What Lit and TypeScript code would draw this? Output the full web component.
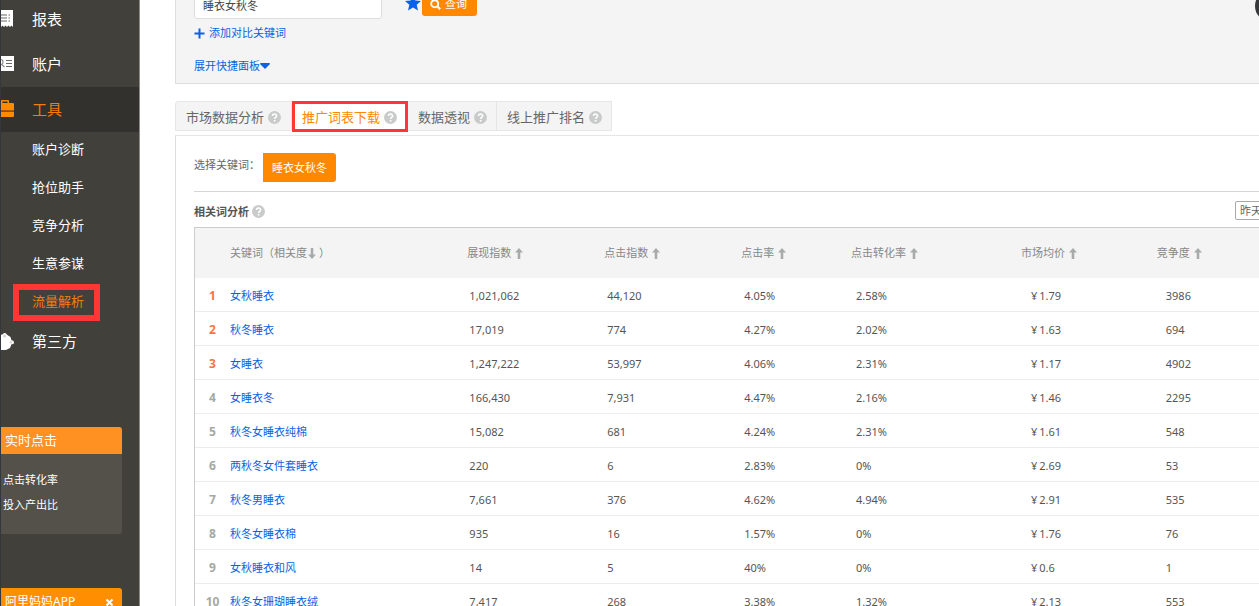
import { LitElement, html, css, svg } from "lit";
import { customElement } from "lit/decorators.js";
import { classMap } from "lit/directives/class-map.js";

type Row = [string, string, string, string, string, string, string];

const ROWS: Row[] = [
  ["女秋睡衣", "1,021,062", "44,120", "4.05%", "2.58%", "1.79", "3986"],
  ["秋冬睡衣", "17,019", "774", "4.27%", "2.02%", "1.63", "694"],
  ["女睡衣", "1,247,222", "53,997", "4.06%", "2.31%", "1.17", "4902"],
  ["女睡衣冬", "166,430", "7,931", "4.47%", "2.16%", "1.46", "2295"],
  ["秋冬女睡衣纯棉", "15,082", "681", "4.24%", "2.31%", "1.61", "548"],
  ["两秋冬女件套睡衣", "220", "6", "2.83%", "0%", "2.69", "53"],
  ["秋冬男睡衣", "7,661", "376", "4.62%", "4.94%", "2.91", "535"],
  ["秋冬女睡衣棉", "935", "16", "1.57%", "0%", "1.76", "76"],
  ["女秋睡衣和风", "14", "5", "40%", "0%", "0.6", "1"],
  ["秋冬女珊瑚睡衣绒", "7,417", "268", "3.38%", "1.32%", "2.13", "553"],
];

const METRICS = ["展现指数", "点击指数", "点击率", "点击转化率", "市场均价", "竞争度"];
const TOOLS = ["账户诊断", "抢位助手", "竞争分析", "生意参谋", "流量解析"];
const TABS = ["市场数据分析", "推广词表下载", "数据透视", "线上推广排名"];

const help = html`<svg class="help" viewBox="0 0 13 13" aria-hidden="true">
  <circle cx="6.5" cy="6.5" r="6.5" fill="#c9cbca" />
  <path d="M4.5 5.1C4.5 2.4 8.6 2.5 8.6 4.9C8.6 6.3 6.6 6.3 6.6 8" fill="none" stroke="#fff" stroke-width="1.5" />
  <rect x="5.8" y="9" width="1.6" height="1.6" fill="#fff" />
</svg>`;

const arrow = (down = false) => html`<svg class=${classMap({ arrow: true, down })} viewBox="0 0 8 11" aria-hidden="true">
  <path d="M4 0L8 4.6H5.3V11H2.7V4.6H0Z" fill="#a9abab" />
</svg>`;

const icons = {
  report: svg`<path d="M0 0H13V17L11.5 15.5L10 17L8.5 15.5L7 17L5.5 15.5L4 17L2.5 15.5L1 17L0 16Z" fill="#fff"/><path d="M0 5H7M0 8H7M0 11H7M8.5 5H10M8.5 8H10M8.5 11H10" stroke="#6b6964" stroke-width="1.2"/>`,
  account: svg`<path d="M0 1H14V16H0Z" fill="#fff"/><path d="M6 5.5H12M6 8.5H12M6 11.5H12" stroke="#6b6964" stroke-width="1.2"/><path d="M0 5Q3 4 3 7Q3 9 1.5 9.5L4.5 12" fill="none" stroke="#8b8985" stroke-width="1.2"/>`,
  tools: svg`<path d="M0 3H1V1Q1 0 2 0H8Q9 0 9 1V3H13Q14 3 14 4V10.500H0ZM2.500 3H7.500V1.400H2.500Z" fill="#ff8a00" fill-rule="evenodd"/><path d="M0 11.800H14V16Q14 17 13 17H0Z" fill="#ff8a00"/><path d="M0 11H14" stroke="#a65d08" stroke-width="1"/>`,
  plugin: svg`<path d="M0 2L2.500 1.500Q3 0 4.700 0T7 1.800L10.500 4L11.500 7.300Q14 7.300 14 9.400T11.500 11.300L10 15L6 17H0Z" fill="#fff"/><circle cx="4.600" cy="3" r="1.600" fill="#d9d7d4"/><circle cx="11" cy="9.300" r="1.400" fill="#d9d7d4"/>`,
};

const icon = (name: keyof typeof icons) => html`<svg class="nav-icon" viewBox="0 0 14 17" aria-hidden="true">${icons[name]}</svg>`;

@customElement("side-bar")
class SideBar extends LitElement {
  static styles = css`
    :host {
      display: flex;
      flex-direction: column;
      flex: 0 0 140px;
      box-sizing: border-box;
      border-left: 1px solid #34373b;
      border-right: 1px solid #8c8b89;
      background: #42403b;
      color: #fff;
      overflow: hidden;
    }
    a { color: inherit; text-decoration: none; }
    nav { margin-top: -3px; }
    .item {
      display: flex;
      align-items: center;
      gap: 18px;
      height: 45px;
      box-sizing: border-box;
      padding-bottom: 2px;
      font-size: 15px;
    }
    .item:last-child { height: 42px; }
    .item.active { background: #33312d; color: #f27d0c; }
    .nav-icon { width: 14px; height: 17px; flex: none; margin-left: -1px; }
    ul {
      display: grid;
      gap: 1px;
      margin: 0;
      padding: 0;
      list-style: none;
      font-size: 13px;
    }
    li a {
      position: relative;
      display: block;
      height: 37px;
      line-height: 35px;
      padding-left: 31px;
    }
    li a.current { color: #f27d0c; }
    .frame {
      position: absolute;
      left: 12px;
      top: 0;
      width: 87px;
      height: 37px;
      box-sizing: border-box;
      border: 6px solid #fd3733;
    }
    .card { margin: 64px 17px 0 0; border-radius: 0 3px 3px 0; overflow: hidden; background: #54504a; flex: none; }
    .card + .card { margin-top: 54px; }
    .card-title {
      display: flex;
      justify-content: space-between;
      align-items: center;
      height: 27px;
      box-sizing: border-box;
      padding: 0 8px 1px 4px;
      margin: 0;
      background: #ff9022;
      font-size: 13px;
      font-weight: 400;
    }
    .card-title.app { padding-top: 2px; background: #ff8f00; font-size: 12px; }
    .card-body { padding: 13px 0 17px 2px; font-size: 11px; line-height: 25px; }
    .card-body { padding-bottom: 17px; }
    .card-body p { margin: 0; }
    button {
      border: 0;
      padding: 0;
      width: 9px;
      height: 9px;
      background: none;
      color: #fff;
      display: block;
    }
    button svg { display: block; width: 9px; height: 9px; }
  `;

  render() {
    return html`
      <nav>
        <a class="item" href="#report">${icon("report")}<span>报表</span></a>
        <a class="item" href="#account">${icon("account")}<span>账户</span></a>
        <a class="item active" href="#tools">${icon("tools")}<span>工具</span></a>
        <ul>
          ${TOOLS.map((t, i) => {
            const current = i === TOOLS.length - 1;
            return html`<li><a class=${classMap({ current })} href="#tool">${t}${current ? html`<span class="frame"></span>` : ""}</a></li>`;
          })}
        </ul>
        <a class="item" href="#third">${icon("plugin")}<span>第三方</span></a>
      </nav>
      <section class="card">
        <h2 class="card-title">实时点击</h2>
        <div class="card-body"><p>点击转化率</p><p>投入产出比</p></div>
      </section>
      <section class="card">
        <h2 class="card-title app">阿里妈妈APP
          <button aria-label="关闭"><svg viewBox="0 0 9 9"><path d="M1.500 1.500L7.500 7.500M7.500 1.500L1.500 7.500" stroke="#fff" stroke-width="2"/></svg></button>
        </h2>
      </section>
    `;
  }
}

@customElement("keyword-table")
class KeywordTable extends LitElement {
  static styles = css`
    :host { display: block; font-size: 11px; }
    table {
      width: 100%;
      table-layout: fixed;
      border-collapse: separate;
      border-spacing: 0;
      box-sizing: border-box;
      border: 1px solid #ccc;
      border-width: 1px 1px 0;
    }
    .c-rank { width: 35px; }
    .c-word { width: 21.5%; }
    .c-m0, .c-m1 { width: 12.4%; }
    .c-m2 { width: 9.95%; }
    .c-m3 { width: 15.4%; }
    .c-m4 { width: 12.3%; }
    th, td { padding: 0; text-align: left; white-space: nowrap; }
    th {
      height: 50px;
      background: #f4f4f4;
      color: #888;
      font-weight: 400;
    }
    td { height: 31px; padding-top: 2px; border-bottom: 1px solid #ececec; color: #555; }
    .rank { text-align: center; font-size: 12px; font-weight: 700; color: #a3aaa6; }
    .rank.top { color: #fa7346; }
    .m0 { padding-left: 2px; }
    .m1, .m2 { padding-left: 3px; }
    .m3 { padding-left: 5px; }
    .m4 { padding-left: 10px; }
    .m5 { padding-left: 9px; }
    .yen { padding-right: 2px; }
    a { color: #0a62e6; text-decoration: none; }
    .arrow { width: 8px; height: 11px; margin-left: 4px; vertical-align: -2px; }
    .arrow.down { margin-left: 1px; margin-right: 3px; transform: rotate(180deg); }
  `;

  render() {
    return html`
      <table>
        <colgroup>
          <col class="c-rank" /><col class="c-word" />
          ${METRICS.map((_, i) => html`<col class="c-m${i}" />`)}
        </colgroup>
        <thead>
          <tr>
            <th></th>
            <th>关键词（相关度${arrow(true)}）</th>
            ${METRICS.map((m) => html`<th>${m}${arrow()}</th>`)}
          </tr>
        </thead>
        <tbody>
          ${ROWS.map(([word, ...cells], r) => html`<tr>
            <td class=${classMap({ rank: true, top: r < 3 })}>${r + 1}</td>
            <td><a href="#word">${word}</a></td>
            ${cells.map((c, i) => html`<td class="m${i}">${i === 4 ? html`<span class="yen">¥</span>` : ""}${c}</td>`)}
          </tr>`)}
        </tbody>
      </table>
    `;
  }
}

@customElement("app-root")
class AppRoot extends LitElement {
  static styles = css`
    :host {
      position: relative;
      display: flex;
      height: 100vh;
      overflow: hidden;
      background: #fff;
      color: #666;
      font: 11px/16px "Noto Sans", "Noto Sans CJK SC", sans-serif;
    }
    main { flex: 1; min-width: 0; overflow: hidden; padding-left: 35px; }
    .work { width: calc(100% + 60px); }
    a { color: #0a62e6; text-decoration: none; }
    button, input, select { font: inherit; }
    .search {
      margin-top: -14px;
      padding: 0 18px 9px;
      background: #f4f4f4;
      border: 1px solid #dedede;
      border-top: 0;
    }
    .query { display: flex; align-items: flex-start; }
    .query input {
      width: 188px;
      height: 30px;
      margin-top: 3px;
      box-sizing: border-box;
      padding: 2px 8px 0;
      border: 1px solid #ddd;
      border-radius: 3px;
      color: #444;
      background: #fff;
    }
    .star { width: 16px; height: 16px; margin: 9px 1px 0 23px; }
    .go {
      display: flex;
      align-items: center;
      gap: 4px;
      width: 55px;
      height: 30px;
      padding: 6px 0 0 8px;
      border: 0;
      border-radius: 3px;
      background: #ff8800;
      color: #fff;
    }
    .go svg { width: 11px; height: 11px; }
    .add, .expand { display: flex; align-items: center; width: max-content; }
    .add { gap: 4px; margin-top: 6px; }
    .add svg { width: 11px; height: 11px; }
    .expand { margin-top: 17px; }
    .expand svg { width: 10px; height: 6px; }
    .tabs { display: flex; margin-top: 17px; height: 31px; }
    .tab {
      display: flex;
      align-items: center;
      gap: 4px;
      height: 30px;
      padding: 2px 9px 0 10px;
      box-sizing: border-box;
      border: 1px solid #e6e6e6;
      border-left: 0;
      background: #f4f4f4;
      color: #666;
      font-size: 13px;
      white-space: nowrap;
    }
    .tab:first-child { padding-right: 10px; border-left: 1px solid #e6e6e6; border-radius: 3px 0 0 0; }
    .tab.active {
      height: 31px;
      padding: 1px 8px 0 7px;
      border: 3px solid #fd3733;
      background: #fff;
      color: #ff8800;
    }
    .help { width: 13px; height: 13px; flex: none; }
    .panel {
      margin-top: 3px;
      padding: 17px 18px 0;
      border: 1px solid #ddd;
      border-top-color: #e6e6e6;
    }
    .pick { display: flex; gap: 3px; padding-bottom: 9px; border-bottom: 1px solid #d6d6d6; }
    .pick span { line-height: 24px; }
    .chip {
      width: 73px;
      height: 29px;
      padding: 1px 0 0;
      border: 0;
      border-radius: 0 3px 3px 0;
      background: #ff8800;
      color: #fff;
    }
    .head { display: flex; align-items: center; justify-content: space-between; height: 35px; }
    h1 {
      display: flex;
      align-items: center;
      gap: 3px;
      margin: 0;
      padding-top: 4px;
      font-size: 11px;
      color: #555;
    }
    select {
      width: 65px;
      height: 19px;
      margin-top: 2px;
      padding: 0;
      border: 1px solid #a9a9a9;
      border-radius: 2px;
      background: #fff;
      color: #666;
    }
    .bubble {
      position: absolute;
      right: -28px;
      top: -10px;
      width: 32px;
      height: 32px;
      border: 0;
      border-radius: 50%;
      background: #38393b;
    }
  `;

  render() {
    return html`
      <side-bar></side-bar>
      <main>
        <div class="work">
          <section class="search">
            <div class="query">
              <input aria-label="关键词" .value=${"睡衣女秋冬"} />
              <svg class="star" viewBox="0 0 16 16" aria-hidden="true"><path d="M8 0L10.300 5.500L16 6L11.700 9.800L13 15.500L8 12.500L3 15.500L4.300 9.800L0 6L5.700 5.500Z" fill="#0a62e6"/></svg>
              <button class="go"><svg viewBox="0 0 11 11" aria-hidden="true"><circle cx="4.700" cy="4.700" r="3.500" fill="none" stroke="#fff" stroke-width="1.900"/><path d="M7.200 7.200L10.200 10.200" stroke="#fff" stroke-width="2.200"/></svg>查询</button>
            </div>
            <a class="add" href="#add"><svg viewBox="0 0 11 11" aria-hidden="true"><path d="M5.500 .5V10.500M.5 5.500H10.500" stroke="#0a62e6" stroke-width="2"/></svg>添加对比关键词</a>
            <a class="expand" href="#expand">展开快捷面板<svg viewBox="0 0 10 6" aria-hidden="true"><path d="M0 1Q0 0 1 0H9Q10 0 10 1L5 6Z" fill="#0a62e6"/></svg></a>
          </section>
          <nav class="tabs">
            ${TABS.map((t, i) => html`<a class=${classMap({ tab: true, active: i === 1 })} href="#tab">${t}${help}</a>`)}
          </nav>
          <section class="panel">
            <div class="pick"><span>选择关键词：</span><button class="chip">睡衣女秋冬</button></div>
            <div class="head">
              <h1>相关词分析${help}</h1>
              <select aria-label="日期"><option>昨天</option></select>
            </div>
            <keyword-table></keyword-table>
          </section>
        </div>
      </main>
      <button class="bubble" aria-label="客服"></button>
    `;
  }
}
